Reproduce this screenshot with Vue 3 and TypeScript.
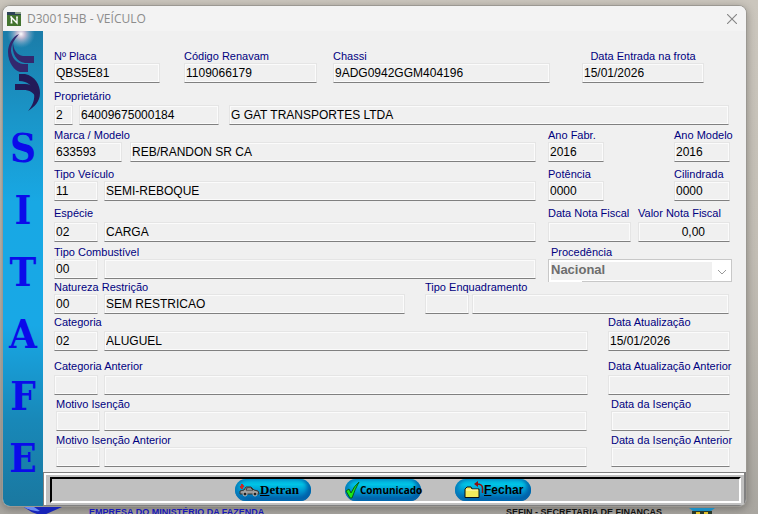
<script setup lang="ts">
import { reactive } from 'vue'

interface Cell {
  key: string
  size: string
  align?: 'right'
}
interface Group {
  label: string
  layout: string
  cells: Cell[]
  select?: boolean
}
interface Row {
  layout: string
  groups: Group[]
}

const letters = ['S', 'I', 'T', 'A', 'F', 'E']

const form = reactive<Record<string, string>>({
  placa: 'QBS5E81',
  renavam: '1109066179',
  chassi: '9ADG0942GGM404196',
  entrada: '15/01/2026',
  propTipo: '2',
  propDoc: '64009675000184',
  propNome: 'G GAT TRANSPORTES LTDA',
  marca: '633593',
  marcaNome: 'REB/RANDON SR CA',
  anoFabr: '2016',
  anoModelo: '2016',
  tipo: '11',
  tipoNome: 'SEMI-REBOQUE',
  potencia: '0000',
  cilindrada: '0000',
  especie: '02',
  especieNome: 'CARGA',
  dataNota: '',
  valorNota: '0,00',
  combustivel: '00',
  combustivelNome: '',
  procedencia: 'Nacional',
  restricao: '00',
  restricaoNome: 'SEM RESTRICAO',
  enquadramento: '',
  enquadramentoNome: '',
  categoria: '02',
  categoriaNome: 'ALUGUEL',
  atualizacao: '15/01/2026',
  catAnterior: '',
  catAnteriorNome: '',
  atualizacaoAnterior: '',
  motivo: '',
  motivoNome: '',
  dataIsencao: '',
  motivoAnterior: '',
  motivoAnteriorNome: '',
  dataIsencaoAnterior: '',
})

const pair = (label: string, key: string, layout = 'grow', size = 'code'): Group => ({
  label,
  layout,
  cells: [{ key, size }, { key: key + 'Nome', size: 'fill' }],
})
const single = (label: string, key: string, layout: string, align?: 'right'): Group => ({
  label,
  layout,
  cells: [{ key, size: 'fill', align }],
})

const rows: Row[] = [
  {
    layout: 'first',
    groups: [
      single('Nº Placa', 'placa', 'plate'),
      single('Código Renavam', 'renavam', 'renavam'),
      single('Chassi', 'chassi', 'grow'),
      single('Data Entrada na frota', 'entrada', 'entry'),
    ],
  },
  {
    layout: 'wide tall gap-l',
    groups: [
      {
        label: 'Proprietário',
        layout: 'grow owner',
        cells: [
          { key: 'propTipo', size: 'tiny' },
          { key: 'propDoc', size: 'doc' },
          { key: 'propNome', size: 'fill' },
        ],
      },
    ],
  },
  {
    layout: 'split gap-s',
    groups: [
      pair('Marca / Modelo', 'marca', 'grow', 'brand'),
      single('Ano Fabr.', 'anoFabr', 'year'),
      single('Ano Modelo', 'anoModelo', 'year end'),
    ],
  },
  {
    layout: 'split gap-m',
    groups: [
      pair('Tipo Veículo', 'tipo'),
      single('Potência', 'potencia', 'year'),
      single('Cilindrada', 'cilindrada', 'year end'),
    ],
  },
  {
    layout: 'split tall gap-m',
    groups: [
      pair('Espécie', 'especie'),
      single('Data Nota Fiscal', 'dataNota', 'note'),
      single('Valor Nota Fiscal', 'valorNota', 'amount', 'right'),
    ],
  },
  {
    layout: 'split gap-s',
    groups: [
      pair('Tipo Combustível', 'combustivel'),
      { label: 'Procedência', layout: 'origin', cells: [{ key: 'procedencia', size: 'fill' }], select: true },
    ],
  },
  {
    layout: 'wide halves gap-xs',
    groups: [
      pair('Natureza Restrição', 'restricao', 'half'),
      pair('Tipo Enquadramento', 'enquadramento', 'grow tight'),
    ],
  },
  {
    layout: 'dates tall gap-xs',
    groups: [pair('Categoria', 'categoria'), single('Data Atualização', 'atualizacao', 'date')],
  },
  {
    layout: 'dates tall gap-xl',
    groups: [
      pair('Categoria Anterior', 'catAnterior'),
      single('Data Atualização Anterior', 'atualizacaoAnterior', 'date'),
    ],
  },
  {
    layout: 'dates inset',
    groups: [pair('Motivo Isenção', 'motivo'), single('Data da Isenção', 'dataIsencao', 'date')],
  },
  {
    layout: 'dates inset',
    groups: [
      pair('Motivo Isenção Anterior', 'motivoAnterior'),
      single('Data da Isenção Anterior', 'dataIsencaoAnterior', 'date'),
    ],
  },
]
</script>

<template>
  <div class="desktop">
    <main class="window">
      <header class="titlebar">
        <svg class="app-icon" viewBox="0 0 14 14">
          <rect width="14" height="14" fill="#43742f" />
          <rect width="14" height="3" fill="#2c4257" />
          <rect x="8" width="6" height="2" fill="#8fa48a" />
          <path d="M4.500 11V5.500L10 11V5" fill="none" stroke="#fff" stroke-width="1.400" />
          <path d="M3 5h2M9 5h2M3.500 11h2" stroke="#fff" />
        </svg>
        <h1>D30015HB - VEÍCULO</h1>
        <button class="close" type="button">
          <svg viewBox="0 0 10 10"><path d="M0 0l10 10M10 0L0 10" stroke="#858585" stroke-width="1.100" /></svg>
        </button>
      </header>

      <div class="body">
        <aside class="brand-bar">
          <svg class="logo" viewBox="0 0 40 84">
            <defs>
              <radialGradient id="flare">
                <stop offset="0" stop-color="#fff" />
                <stop offset=".3" stop-color="#e9c9dc" stop-opacity=".8" />
                <stop offset="1" stop-color="#7fb4d2" stop-opacity="0" />
              </radialGradient>
            </defs>
            <circle cx="18" cy="3" r="14" fill="url(#flare)" />
            <g fill="#33286e">
              <path d="M16 3C9 6 5 14 5 21C5 32 12 40 17 41H25V33H20C13 32 9 27 8 20C8 13 12 8 16 3z" />
              <path d="M10 10C10 19 14 24 20 25H31V32H22C14 31 8 23 10 10z" />
            </g>
            <g fill="#231a58">
              <path d="M16 43H22C32 45 37 54 37 62C37 71 31 76 25 80C30 74 32 68 31 62C30 55 25 50 16 50z" />
              <path d="M12 53H22C30 53 35 59 35 69C30 61 27 59 20 59H12z" />
            </g>
          </svg>
          <span v-for="letter in letters" :key="letter" class="letter">{{ letter }}</span>
        </aside>

        <div class="content">
          <form class="form" @submit.prevent>
            <div v-for="(row, r) in rows" :key="r" class="row" :class="row.layout">
              <div v-for="group in row.groups" :key="group.label" class="group" :class="group.layout">
                <label :id="'label-' + group.cells[0].key" :for="group.cells[0].key">{{ group.label }}</label>
                <select v-if="group.select" :id="group.cells[0].key" v-model="form[group.cells[0].key]" disabled>
                  <option>Nacional</option>
                </select>
                <div v-else class="cells">
                  <input
                    v-for="cell in group.cells"
                    :id="cell.key"
                    :key="cell.key"
                    v-model="form[cell.key]"
                    type="text"
                    readonly
                    :aria-labelledby="'label-' + group.cells[0].key"
                    :class="[cell.size, cell.align]"
                  />
                </div>
              </div>
            </div>
          </form>

          <footer class="toolbar">
            <div class="tray">
              <button type="button" class="pill serif">
                <svg width="21" height="14" viewBox="0 0 21 14">
                  <path d="M1 8l4-1 2-3h5l3 3 4 1 1 3H1z" fill="#9a9a9a" stroke="#333" />
                  <path d="M7 7l1-2h4l2 2z" fill="#d9e3e6" stroke="#333" />
                  <path d="M3 1v5M1 4l4-1" stroke="#c62828" stroke-width="2" />
                  <circle cx="6" cy="11" r="2" fill="#222" stroke="#bbb" />
                  <circle cx="16" cy="11" r="2" fill="#222" stroke="#bbb" />
                </svg>
                <span><u>D</u>etran</span>
              </button>
              <button type="button" class="pill check">
                <svg width="15" height="18" viewBox="0 0 15 18">
                  <path d="M1 10l3-2 2 4Q9 5 14 1 10 8 7 17H5z" fill="#18e818" stroke="#075c1a" />
                </svg>
                <span>Comunicado</span>
              </button>
              <button type="button" class="pill folder">
                <svg width="20" height="18" viewBox="0 0 20 18">
                  <path d="M1 16.500V8l2-2h4l1 2h7v8.500z" fill="#f4ec5c" stroke="#111" />
                  <path d="M2 9h12" stroke="#fffbc4" />
                  <path d="M18.500 12V7q0-4-6-4" fill="none" stroke="#8c1010" stroke-width="1.500" />
                  <path d="M10 3l4-3v6z" fill="#8c1010" />
                </svg>
                <span><u>F</u>echar</span>
              </button>
            </div>
          </footer>
        </div>
      </div>
    </main>

    <div class="backdrop">
      <svg class="swoosh" width="42" height="8" viewBox="0 0 42 8">
        <path d="M2 0Q12 8 22 8L40 0z" fill="#1724b8" />
        <path d="M2 0Q10 5 18 4L12 0z" fill="#6a8cf0" />
      </svg>
      <span class="company">EMPRESA DO MINISTÉRIO DA FAZENDA</span>
      <span class="office">SEFIN - SECRETARIA DE FINANÇAS</span>
      <svg class="crest" width="26" height="8" viewBox="0 0 26 8">
        <path d="M0 1h26l-4 3H4z" fill="#1c8fc4" />
        <path d="M3 4h20v4H3z" fill="#2b3a2a" />
        <path d="M7 5h4v3H7zM15 5h4v3h-4z" fill="#e2c12c" />
      </svg>
    </div>
  </div>
</template>

<style>
body {
  overflow: hidden;
}
</style>

<style scoped>
* {
  box-sizing: border-box;
}
.desktop {
  height: 100vh;
  padding: 5px 11px 0 2px;
  overflow: hidden;
  background: linear-gradient(#cbc6bd, #c2bdb4 50%, #a9a6a0);
  font-family: 'Liberation Sans', Arial, sans-serif;
}
.window {
  overflow: hidden;
  border: 1px solid #9b9892;
  border-radius: 8px;
  background: #f0f0f0;
  box-shadow: 0 2px 8px rgba(0, 0, 0, 0.3);
}
.titlebar {
  display: flex;
  align-items: center;
  height: 25px;
  padding: 0 8px 0 4px;
  background: #f3f3f3;
}
.app-icon {
  width: 14px;
  height: 14px;
}
h1 {
  flex: 1;
  margin: 0 0 0 6px;
  color: #8c8c8c;
  font: 12px 'Open Sans', 'Noto Sans', sans-serif;
}
.close {
  display: flex;
  padding: 1px;
  border: 0;
  background: none;
}
.close svg {
  width: 10px;
  height: 10px;
}
.body {
  display: flex;
}
.brand-bar {
  display: flex;
  flex: none;
  flex-direction: column;
  align-items: center;
  width: 40px;
  background: linear-gradient(#1b7ca8, #1a95c8 18%, #18a8e4 36%, #18a8e6 62%, #1888b8 82%, #1a78a0);
}
.logo {
  width: 40px;
  height: 84px;
}
.letter {
  height: 62px;
  color: #0b0bea;
  font: bold 40px/66px 'DejaVu Serif Condensed', 'DejaVu Serif', serif;
}
.content {
  display: flex;
  flex: 1;
  flex-direction: column;
  min-width: 0;
}
.form {
  flex: 1;
  padding: 18px 14px 5px 11px;
}
.row {
  display: flex;
  gap: 12px;
  padding-right: 2px;
}
.gap-xs {
  margin-top: 1px;
}
.gap-s {
  margin-top: 3px;
}
.gap-m {
  margin-top: 5px;
}
.gap-l {
  margin-top: 6px;
}
.gap-xl {
  margin-top: 8px;
}
.first {
  gap: 16px;
  padding-right: 28px;
}
.wide {
  padding-right: 3px;
}
.halves {
  gap: 20px;
}
.dates {
  gap: 20px;
  padding-right: 2px;
}
.inset {
  gap: 24px;
  margin-top: 2px;
  padding: 0 2px;
}
.group {
  display: flex;
  flex: none;
  flex-direction: column;
}
.grow {
  flex: 1;
  min-width: 0;
}
.plate {
  width: 106px;
  margin-right: 8px;
}
.renavam {
  width: 133px;
}
.entry {
  width: 122px;
  margin-left: 16px;
}
.entry label {
  text-align: center;
}
.year {
  width: 56px;
}
.year.end {
  margin-left: 58px;
}
.note {
  width: 83px;
}
.amount {
  width: 92px;
  margin-left: -5px;
}
.origin {
  width: 184px;
  height: 34px;
  margin-right: -2px;
}
.origin label {
  padding-left: 3px;
}
.half {
  flex: 0 0 52%;
}
.date {
  width: 122px;
}
.inset .date {
  width: 119px;
}
label {
  height: 14px;
  color: #000080;
  font-size: 11px;
  line-height: 14px;
  white-space: nowrap;
}
.tall label {
  height: 16px;
}
.cells {
  display: flex;
  gap: 6px;
}
.inset .cells {
  gap: 4px;
}
.tight .cells {
  gap: 3px;
}
input {
  width: 44px;
  min-width: 0;
  height: 20px;
  padding: 0 0 0 1px;
  border: 1px solid #e5e5e5;
  border-bottom-color: #808080;
  border-radius: 0;
  outline: 0;
  background: #f0f0f0;
  box-shadow: inset 0 0 0 1px #fbfbfb;
  color: #000;
  font: 12px 'Liberation Sans', Arial, sans-serif;
}
.tiny {
  width: 19px;
}
.doc {
  width: 140px;
  margin-right: 4px;
}
.brand {
  width: 68px;
  margin-right: 2px;
}
.fill {
  flex: 1;
}
.right {
  padding-right: 24px;
  text-align: right;
}
select {
  flex: none;
  width: 100%;
  height: 23px;
  padding: 0 0 3px 2px;
  appearance: none;
  border: 1px solid #c8c8c8;
  border-bottom: 0;
  border-radius: 0;
  background:
    linear-gradient(#c8c8c8, #c8c8c8) 33px 100% / 100% 1px no-repeat,
    linear-gradient(#f0f0f0, #f0f0f0) 2px 2px / calc(100% - 21px) 18px no-repeat,
    url("data:image/svg+xml,%3Csvg xmlns='http://www.w3.org/2000/svg' width='10' height='6'%3E%3Cpath d='M1 1l4 4 4-4' fill='none' stroke='%23999'/%3E%3C/svg%3E") calc(100% - 4px) 9px no-repeat,
    #fff;
  color: #6d6d6d;
  font: bold 13px 'Liberation Sans', Arial, sans-serif;
  opacity: 1;
}
.toolbar {
  padding: 2px;
  border: 1px solid #808080;
  border-width: 1px 2px 1px 1px;
  background: #c0c0c0;
  box-shadow: inset 2px 2px #fff;
}
.tray {
  display: flex;
  gap: 34px;
  justify-content: center;
  margin: 2px 1px 0 4px;
  padding-right: 25px;
  border: 2px solid #fff;
  border-top: 2px solid #000;
  border-left-color: #000;
  background: #c0c0c0;
}
.pill {
  display: flex;
  align-items: center;
  width: 76px;
  height: 22px;
  padding: 0 0 0 4px;
  border: 0;
  border-radius: 11px;
  background: linear-gradient(#00b4dc, #00c4e6 25%, #0090cc 60%, #0058a4);
  box-shadow: inset 3px 0 4px #0878b8, inset -4px -2px 4px #0060a8;
  color: #000;
  font: bold 12px 'Liberation Sans', Arial, sans-serif;
  white-space: nowrap;
}
.pill svg {
  flex: none;
}
.serif {
  font: bold 13px 'Liberation Serif', serif;
}
.check {
  padding-left: 0;
  font: bold 10px 'Open Sans', 'Noto Sans', sans-serif;
}
.folder {
  padding-left: 9px;
}
.backdrop {
  display: flex;
  height: 8px;
  padding: 0 32px 0 20px;
  font-size: 9px;
  font-weight: bold;
  line-height: 10px;
  white-space: nowrap;
}
.company {
  margin-left: 25px;
  color: #1818b8;
}
.office {
  margin-right: 27px;
  margin-left: auto;
  color: #111;
}
</style>
